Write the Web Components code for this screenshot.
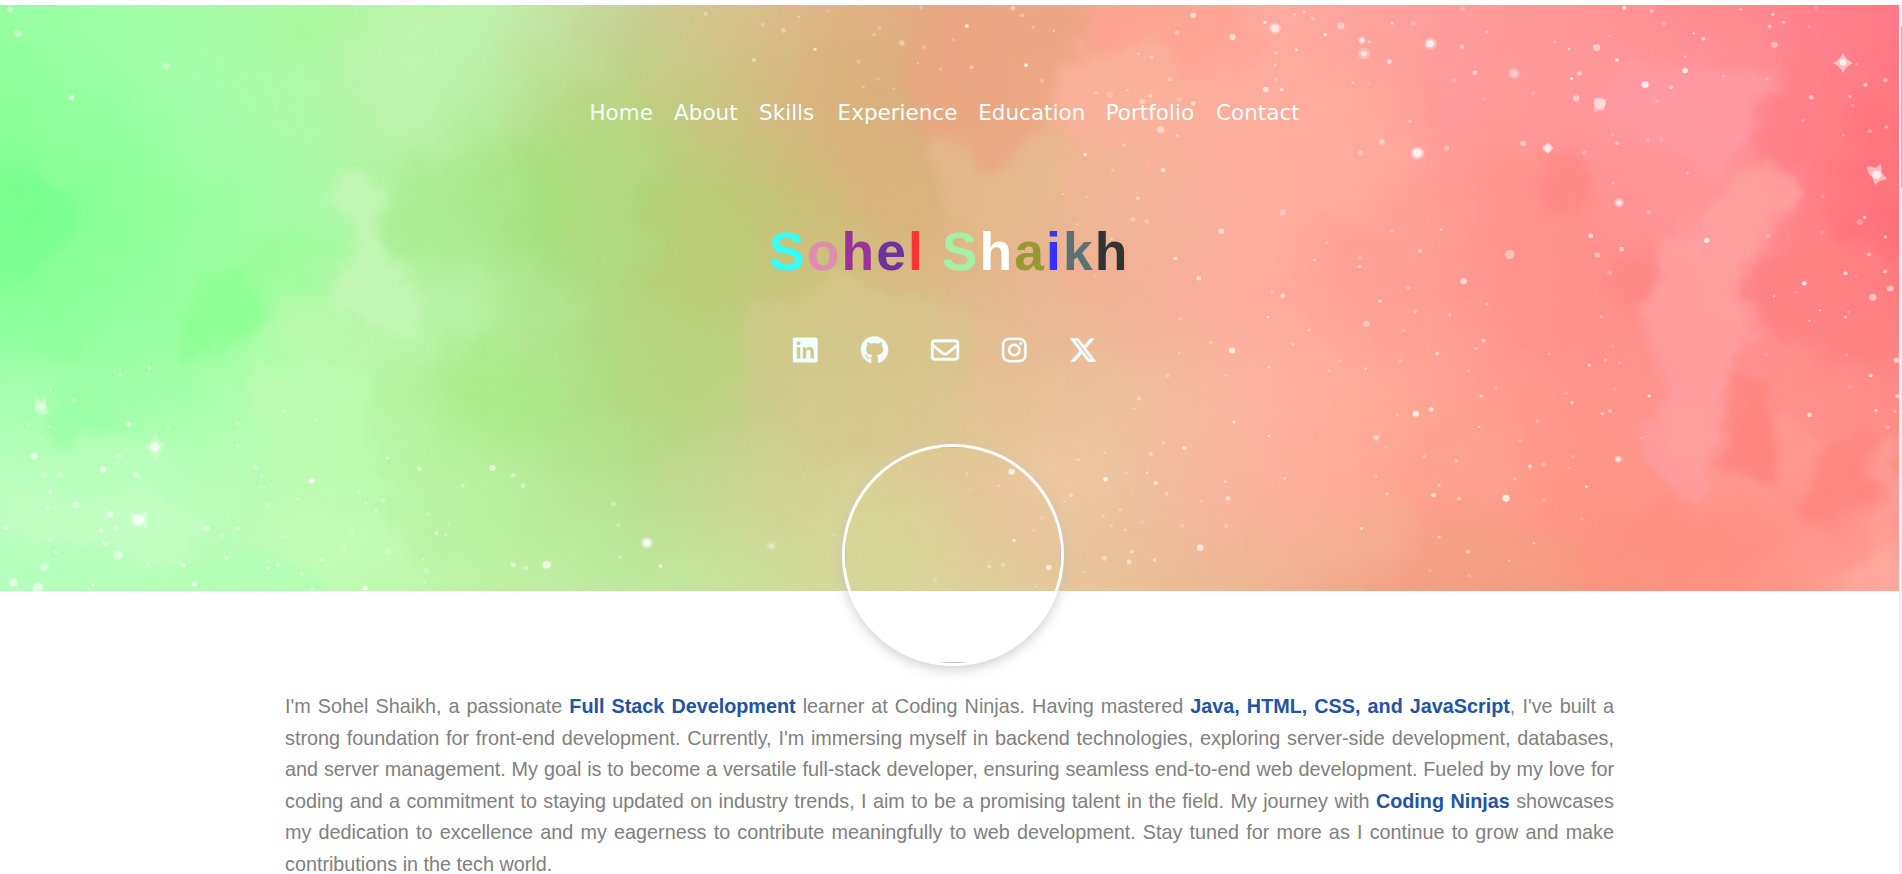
<!DOCTYPE html>
<html lang="en">
<head>
<meta charset="utf-8">
<title>Sohel Shaikh</title>
<style>
html{height:100%;overflow:hidden;background:#fff}
body{margin:0;height:100%;display:flex;font-family:"Liberation Sans",Arial,sans-serif}
main{flex:1;min-width:0}
</style>
</head>
<body>
<main>
<hero-banner>
  <site-nav></site-nav>
  <color-title text="Sohel Shaikh"></color-title>
  <social-links></social-links>
  <profile-photo slot="photo"></profile-photo>
</hero-banner>
<about-text>I'm Sohel Shaikh, a passionate <b>Full Stack Development</b> learner at Coding Ninjas. Having mastered <b>Java, HTML, CSS, and JavaScript</b>, I've built a strong foundation for front-end development. Currently, I'm immersing myself in backend technologies, exploring server-side development, databases, and server management. My goal is to become a versatile full-stack developer, ensuring seamless end-to-end web development. Fueled by my love for coding and a commitment to staying updated on industry trends, I aim to be a promising talent in the field. My journey with <b>Coding Ninjas</b> showcases my dedication to excellence and my eagerness to contribute meaningfully to web development. Stay tuned for more as I continue to grow and make contributions in the tech world.</about-text>
</main>
<scroll-rail></scroll-rail>
<script>
const define=(name,html,ready)=>customElements.define(name,class extends HTMLElement{
  connectedCallback(){
    if(this.shadowRoot)return;
    this.attachShadow({mode:'open'}).innerHTML=html;
    if(ready)ready(this,this.shadowRoot);
  }
});

/* Watercolour sky: a colour grid softened vertically, soft clouds on top, then stars. */
const GRID=[
'98ffa2 a1ffa6 aef9a2 c1f2b0 c9d095 dcb988 e8a883 f6a48a ffaaa0 ff9e9c ff9495 ff8890 ff7888',
'8dff9a a2ffaa b0f9a9 baeea3 bdd080 d6b880 e6a984 f7b297 ffac9c ff9c9a ff9899 ff929a ff7880',
'7aff90 92ff9c aafba8 aeea90 acd678 c9c078 deb482 f0b898 ffaf9e ff9f98 ff9292 ff9698 ff6e78',
'86ff98 96ffa0 aafca4 b4f0a0 b2d880 c9c47c deb98a f0b296 ffab9c ff9f94 ff8f8b ff9296 ff7a80',
'a8ffb0 a0ffa8 bafcb0 b0ee92 b2da82 cdcc8c e0c492 eec29c ffb4a0 ffa494 ff948a ff938f ff8c86',
'bcffc0 bbffbd bafab0 b8f2a0 b9e090 d4d296 e2ca98 eec29e fcb29c ffa28e ff9484 ff9a92 ff8a82',
'b4ffbe b4ffb8 bdfab4 bff2a4 bdeaa0 cfdd98 dcd29a e8c299 eeb492 f49d82 fb957f ff9284 ffa59c'
].map(r=>r.split(' '));

/* colour, opacity, blur class, polygon */
const CLOUDS=[
['78ff90',.7,'m','0,150 20,170 45,180 80,205 70,240 0,290'],
['90ff9c',.6,'l','0,40 25,60 30,100 70,90 160,100 150,150 70,160 0,150'],
['8cff94',.9,'m','175,325 195,300 205,275 240,265 268,280 272,318 250,336 225,345 210,368 180,362'],
['98fb98',.6,'m','235,240 290,235 335,245 330,262 300,285 260,275'],
['8cff9a',.7,'m','45,300 75,310 90,340 80,370 60,370 42,330'],
['96ffa2',.6,'m','60,380 100,395 120,405 125,430 85,445 50,430'],
['a9ea8e',.6,'l','395,185 440,150 500,150 530,200 525,250 480,262 440,275 390,270 380,230'],
['a4df74',.5,'l','525,130 555,120 580,180 570,260 545,292 525,250 505,225'],
['c0f6ae',.55,'l','270,300 380,275 470,280 480,330 400,380 310,370 270,340'],
['c8f7ba',.75,'m','322,203 332,182 355,168 380,174 390,195 386,235 396,262 420,285 410,335 350,315 325,295 352,255 350,225'],
['bbfdb0',.8,'m','258,368 320,360 365,382 370,440 400,500 350,500 280,470 250,420'],
['a7eb88',.7,'l','440,350 510,340 550,400 575,430 520,440 460,420'],
['c4ffb8',.7,'l','280,500 340,490 390,530 430,585 250,585'],
['c4ffc4',.8,'m','85,500 130,480 160,500 220,525 170,560 110,560 75,530'],
['c4ffc4',.7,'m','5,505 45,495 85,505 90,530 40,545 0,530'],
['acffb4',.7,'m','190,560 290,555 330,590 200,590'],
['baffbd',.6,'m','40,460 90,430 150,445 190,470 130,490 50,480'],
['c1f3ae',.7,'l','370,10 460,10 470,60 430,150 380,160 350,90'],
['a7f898',.5,'m','280,10 360,10 330,45 285,50'],
['b8da84',.6,'l','560,120 610,90 640,160 625,260 590,270 575,230'],
['bcca76',.8,'l','650,270 700,180 760,190 740,290 700,330 650,290'],
['b6d27a',.7,'l','630,280 700,300 760,350 720,420 660,420 620,350'],
['d6c990',.5,'m','740,310 850,280 930,290 980,340 960,420 830,460 760,400'],
['dab17c',.6,'l','800,40 880,20 920,60 930,150 950,200 930,250 880,240 830,180'],
['eba682',.75,'m','930,8 1060,8 1090,20 1085,45 1058,60 1050,110 1015,155 990,168 960,150 925,130 905,70'],
['e5b98d',.7,'m','922,150 935,132 958,140 980,165 1010,175 1060,115 1070,180 1020,260 960,250 945,190'],
['ffa293',.7,'m','1095,10 1230,8 1260,40 1250,70 1200,75 1160,38 1120,50 1090,40'],
['fcb39c',.6,'m','1060,60 1110,48 1160,42 1190,80 1180,150 1110,160 1060,120'],
['ffae9e',.6,'l','1200,60 1320,50 1400,90 1410,160 1360,215 1280,210 1210,180'],
['f0b192',.6,'m','1050,250 1120,250 1140,290 1110,310 1060,295'],
['d4d796',.45,'l','815,480 880,470 940,500 960,560 940,590 810,590'],
['ecc8a0',.6,'l','1010,440 1100,430 1130,500 1060,540 1010,500'],
['ff9c92',.6,'l','1310,235 1350,225 1400,240 1440,280 1400,330 1330,290'],
['ff9289',.7,'l','1460,160 1530,150 1590,200 1610,290 1600,380 1510,350 1480,250'],
['ff8785',.8,'m','1540,165 1575,158 1590,175 1585,205 1560,215 1540,190'],
['ff8785',.8,'m','1605,260 1640,255 1657,275 1655,295 1632,315 1610,295'],
['ff9ba2',.8,'m','1620,70 1680,60 1760,70 1785,90 1780,130 1740,150 1720,180 1680,150 1600,120'],
['ff7e86',.8,'m','1790,65 1860,55 1902,80 1902,200 1850,230 1800,190 1770,160 1748,150'],
['ff7079',.8,'l','1860,90 1902,80 1902,290 1870,265 1830,235 1850,190'],
['ff8182',.8,'m','1770,250 1810,220 1870,240 1902,270 1902,350 1830,360 1770,340 1745,290'],
['ff9fa0',.9,'m','1745,178 1782,162 1798,180 1795,205 1765,232 1746,275 1748,335 1728,375 1718,440 1710,490 1675,500 1652,480 1645,430 1668,385 1652,340 1638,310 1665,285 1655,245 1700,215'],
['ff8680',.95,'m','1738,372 1755,366 1776,380 1768,420 1782,440 1787,475 1760,480 1718,455 1722,425 1735,405'],
['ff9990',.9,'m','1770,422 1790,410 1815,440 1822,455 1800,490 1784,490 1786,450'],
['ff867f',.8,'m','1830,440 1850,427 1866,436 1864,460 1876,490 1860,515 1810,520 1795,500 1820,470'],
['ff8f80',.7,'l','1640,490 1720,500 1800,520 1790,570 1680,575 1600,540'],
['ff9f98',.8,'m','1902,430 1870,455 1880,490 1868,540 1902,560'],
['ffa89e',.9,'m','1902,540 1870,555 1845,592 1902,592'],
['ffa494',.6,'l','1445,440 1520,430 1530,500 1480,510 1440,490'],
['f2a385',.6,'l','1400,545 1480,510 1560,540 1570,592 1400,592'],
['f2b394',.6,'l','1290,520 1380,500 1420,530 1380,580 1280,570']
];

/* Each star: x y radius opacity(0-9), in thirds of the sky's width */
const STARS=[[0,`25 25 7 6,43 87 10 5,406 172 9 4,175 254 7 7,366 961 5 6,294 979 5 7,124 1020 3 6,102 1062 9 5,182 1046 7 3,316 1109 6 7,71 1110 5 4,120 1116 4 5,411 1116 6 3,101 1147 4 5,380 1168 11 9,83 1192 9 7,290 1192 7 4,252 1227 8 8,334 1240 7 6,147 1241 6 5,108 1240 7 3,582 1106 5 5,583 1165 4 5,697 1074 4 7,776 1097 4 3,625 1221 6 5,641 1244 4 4,764 1256 8 9,639 1273 3 5,649 1273 3 5,730 1303 4 5,657 1320 7 3,124 1284 5 5,117 1325 5 6,185 1320 9 4,271 1344 8 7,340 1357 14 9,285 1381 5 5,247 1386 6 7,14 1379 5 6,124 1409 6 3,258 1420 6 6,506 1381 8 7,583 1382 6 5,545 1399 6 3,557 1346 5 3,697 1401 5 3,136 1443 5 5,289 1451 12 5,109 1481 11 4,555 1458 5 7,449 1477 6 7,363 1474 4 4,682 1475 6 6,657 1484 6 6,788 1462 5 6,739 1499 5 5,476 1525 7 7,33 1522 11 6,93 1535 13 6,228 1528 4 7,895 1536 7 8,765 1539 4 5,950 1197 4 8,1028 1225 6 7,1207 1223 8 7,1258 1242 6 5,1134 1269 5 5,1282 1269 6 5,880 1284 4 5,896 1315 4 5,922 1333 4 6,938 1308 6 5,1051 1343 4 4,1070 1393 4 7,1092 1398 4 4,1099 1368 3 4,863 1385 5 3,951 1439 8 3,843 1428 5 3,1037 1462 4 4,1258 1476 6 7,1288 1484 6 4,1340 1476 10 8,1046 1492 8 3,1041 1521 4 4`],
[600,`259 36 5 4,399 64 5 3,450 80 6 4,487 44 3 5,377 157 5 5,527 129 4 9,559 28 4 2,634 161 5 3,672 90 5 3,685 72 5 3,740 112 7 4,795 123 5 3,787 20 5 3,899 68 5 8,911 176 5 5,1044 170 5 9,1084 211 5 3,1012 21 6 5,1035 40 5 4,682 206 3 4,646 228 3 4,720 232 3 4,779 165 3 4,866 103 4 3,835 180 4 3,1061 71 4 3,1112 81 3 5,1216 243 5 3,1250 247 7 3,1293 235 3 5,1349 250 5 7,1415 85 6 5,1454 40 7 7,1550 97 8 7,1352 150 5 4,1320 140 3 5,1396 207 5 4,1330 265 7 4,1420 260 6 3,1454 270 6 6,1374 339 9 5,1415 354 4 4,1284 379 5 3,1189 404 5 7,1380 444 6 7,1256 444 4 3,1318 518 5 5,1134 507 3 5,1194 515 3 4,1306 573 6 4,1340 579 6 3,1170 586 4 3,1523 604 7 7,1254 625 3 6,1410 675 5 6,1468 727 6 7,1213 723 4 2,1423 833 5 3,1498 895 3 6,1549 916 8 8,1420 923 3 4,1391 981 5 4,1534 981 4 3,1321 1042 5 4,1309 1068 4 4,1554 1103 4 6,1381 1157 4 4,1432 1170 5 7,1350 1186 5 5,1237 1183 3 4,1172 1201 4 4,1009 1233 8 8,900 1238 4 3,1239 1252 6 8,1362 1262 5 7,1289 1234 4 3,1341 1236 3 6,1389 1290 5 4,1154 1294 5 5,1138 1310 3 5,1084 1353 6 2,977 1270 4 3,908 1281 3 3,1539 1302 6 6,1533 1258 4 6,1474 1310 3 5,1329 1365 6 2,1427 1374 5 3,1535 1375 5 3,1253 1374 4 4,1288 1384 4 4,1233 1347 4 4,1275 1332 4 4,1015 1412 4 8,1063 1386 4 3,954 1480 4 6,988 1476 5 4,1100 1483 7 7,1471 1431 8 8,1303 1441 5 5,1236 1459 7 4,1297 1468 6 6,1359 1463 4 6,1185 1494 3 5,821 1516 5 3,1069 1533 3 4,115 1418 14 6,115 1418 7 9,420 1425 12 2,420 1427 6 4,148 1479 5 6,33 1317 6 4,45 1372 5 4,50 1455 5 4,575 1399 3 4`],
[1262,`32 74 15 3,32 74 10 7,7 58 4 8,80 37 4 4,104 31 4 6,125 48 5 4,155 90 4 9,85 130 4 7,193 68 9 5,245 105 10 3,245 105 6 8,250 140 15 3,250 140 7 8,263 109 4 4,312 161 6 7,319 60 4 7,371 60 6 3,413 114 15 4,412 114 9 9,490 122 6 5,492 22 6 3,522 190 6 6,470 210 5 3,551 83 3 6,618 192 14 3,618 192 8 4,34 137 4 5,33 170 4 5,35 207 4 4,9 234 7 7,48 234 5 6,222 216 4 4,261 216 4 3,544 259 4 4,665 244 5 3,717 110 3 5,753 128 3 7,759 205 4 8,778 192 6 6,820 124 9 6,870 157 5 8,852 95 3 5,888 21 5 8,955 28 6 4,985 61 6 3,770 257 8 6,828 270 15 5,939 221 9 9,1002 228 5 6,969 263 5 3,1037 184 7 9,1037 148 3 7,1058 87 3 7,1082 101 5 7,1131 199 3 6,1173 25 3 6,1252 37 4 6,1278 58 4 6,1244 69 5 6,1256 117 8 5,1237 206 5 3,1341 69 4 3,1358 21 4 3,1346 254 6 6,1441 252 4 6,1479 222 5 7,1528 209 6 5,1424 163 8 9,1458 168 4 3,1530 332 4 6,1490 343 5 4,1425 354 3 5,1326 315 4 4,1447 276 4 3,1507 457 11 8,1043 452 3 6,362 317 5 4,294 371 7 5,242 400 7 4,452 387 7 4,381 400 17 4,381 400 11 9,640 374 7 5,700 387 12 4,700 388 7 7,859 352 3 5,871 374 5 5,945 365 4 4,979 365 3 5,790 400 6 3,875 530 12 4,875 530 7 8,860 479 3 5,948 555 6 3,51 555 8 4,806 616 6 8,822 666 7 5,881 651 6 6,852 713 6 3,607 665 12 5,387 655 5 5,439 600 3 8,318 604 4 3,159 634 3 4,129 680 3 7,240 675 4 4,239 696 4 6,494 735 8 7,359 752 5 4,289 787 4 7,376 814 4 5,256 846 8 5,51 773 6 5,25 763 4 4,15 828 3 8,115 862 3 7,347 863 5 3,460 823 3 8,550 794 4 5,543 890 5 6,429 924 5 6,190 943 3 7,165 968 4 4,76 900 4 5,254 963 3 8,340 944 5 3,507 969 3 6,525 911 3 6,17 959 4 6,537 1035 4 7,573 1015 5 3,377 1081 8 9,415 1070 6 8,331 1084 4 4,531 1116 3 8,17 1139 3 9,280 1144 8 4,280 1144 4 6,304 1168 4 3,398 1193 4 4,476 1204 5 4,280 1245 4 4,55 1250 4 5,307 1290 4 5,434 1268 4 5,421 1294 6 7,483 1303 5 5,598 1302 9 9,620 1250 4 5,657 1219 5 7,690 1213 6 3,873 1200 9 4,873 1200 5 8,795 1272 4 8,784 1355 5 3,244 1381 4 7,434 1403 4 6,505 1441 5 5,412 1491 3 4,508 1505 3 4,667 1420 3 5,606 1465 3 4,760 1052 4 7,853 1074 5 5,746 1028 5 3,834 1081 4 6,675 1100 5 3,802 954 4 8,842 941 4 4,876 948 3 5,859 905 3 5,949 1034 4 9,831 827 4 4,704 925 3 4,1090 628 7 9,1241 617 5 3,1372 608 6 2,1465 580 8 3,1477 568 4 7,1528 619 4 7,1488 665 5 6,1430 714 5 8,1329 740 6 9,1255 774 3 6,1540 754 8 6,1527 709 5 6,1497 777 9 6,1368 811 3 7,1342 838 3 6,1430 829 3 9,1455 723 3 4,1309 764 3 4,1374 513 5 3,1437 815 3 4,1432 928 4 3,1555 941 7 7,1492 981 5 7,1557 1035 5 7,1440 1011 5 2,1505 1072 4 7,1551 1075 4 5,1533 1117 5 4,1342 1084 6 7,1236 926 4 2,763 1193 4 3,754 1223 3 4,632 1151 4 3,691 1307 5 3,864 1015 5 3,931 1144 3 4`]];

const sky=()=>{
  let defs='',bands='',clouds='',stars='';
  GRID.forEach((row,i)=>{
    defs+=`<linearGradient id="g${i}" gradientUnits="userSpaceOnUse" x1="0" x2="1900">`+row.map((c,j)=>`<stop offset="${j/12}" stop-color="#${c}"/>`).join('')+'</linearGradient>';
    const y=i?i*98-44:-200;
    bands+=`<rect x="-150" y="${y}" width="2200" height="${i==6?300:i?98:254}" fill="url(#g${i})"/>`;
  });
  for(const [c,o,k,p] of CLOUDS)clouds+=`<polygon fill="#${c}" fill-opacity="${o}" points="${p}" filter="url(#${k})"/>`;
  for(const [x,list] of STARS)stars+=`<g transform="translate(${x} 0) scale(.408 .3827)">`+list.split(',').map(s=>{const [a,b,r,o]=s.split(' ');return `<circle cx="${a}" cy="${b}" r="${r}" opacity="${o/10*.85}"/>`}).join('')+'</g>';
  const spark=(x,y,r,o)=>`<path opacity="${o}" d="M${x} ${y-r}Q${x+r*.3} ${y-r*.3} ${x+r} ${y}Q${x+r*.3} ${y+r*.3} ${x} ${y+r}Q${x-r*.3} ${y+r*.3} ${x-r} ${y}Q${x-r*.3} ${y-r*.3} ${x} ${y-r}"/>`;
  stars+=spark(1843,63,10,.5)+spark(1548,148,6,.4)+`<path opacity=".5" d="M1867 167q4-2 8 1l6-4 1 9 5 6-7 2-5 4-3-8q-5-4-5-10z"/><path opacity=".35" d="M129 512l10 2 8-2v15l-14 0z"/><path opacity=".35" d="M36 397l5 4 5-4v7l3 10-8 1-7-4z"/><path opacity=".25" d="M155 432l4 8 6 4-4 8-6 8-5-9-5-4 6-5z"/><path opacity=".35" d="M1594 98l12 2-2 10-10 2z"/>`;
  return `<svg viewBox="0 5 1899 586" preserveAspectRatio="none"><defs>${defs}
  <filter id="v" filterUnits="userSpaceOnUse" x="-150" y="-200" width="2200" height="1000" color-interpolation-filters="sRGB"><feGaussianBlur stdDeviation="12 34"/></filter>
  <filter id="m" x="-40%" y="-40%" width="180%" height="180%" color-interpolation-filters="sRGB"><feGaussianBlur stdDeviation="7"/></filter>
  <filter id="l" x="-60%" y="-60%" width="220%" height="220%" color-interpolation-filters="sRGB"><feGaussianBlur stdDeviation="18"/></filter>
  <filter id="w" filterUnits="userSpaceOnUse" x="-60" y="-60" width="2020" height="720" color-interpolation-filters="sRGB"><feTurbulence type="fractalNoise" baseFrequency=".022" numOctaves="4" seed="4" result="n"/><feDisplacementMap in="SourceGraphic" in2="n" scale="38" xChannelSelector="R" yChannelSelector="G"/></filter></defs>
  <g filter="url(#w)"><g filter="url(#v)">${bands}</g>${clouds}</g><g fill="#fff">${stars}</g></svg>`;
};

define('hero-banner',`<style>
:host{display:flex;flex-direction:column;align-items:center;position:relative;box-sizing:border-box;height:586px;margin-top:5px}
.sky{position:absolute;inset:0;overflow:hidden}
.sky svg{display:block;width:100%;height:100%}
.body{position:relative;display:flex;flex-direction:column;align-items:flex-start;width:100%;flex:1}
.photo{position:absolute;left:842px;top:439px}
</style><div class="sky">${sky()}</div><div class="body"><slot></slot></div><div class="photo"><slot name="photo"></slot></div>`);

define('site-nav',`<style>
:host{display:block;margin:94px 0 0 589.4px;height:28px}
nav{display:grid;grid-template-columns:84.7px 85px 78.5px 140.7px 127.4px 110.4px auto;font:21.5px/28px "DejaVu Sans",Verdana,sans-serif;color:azure;white-space:nowrap}
</style><nav><a>Home</a><a>About</a><a>Skills</a><a>Experience</a><a>Education</a><a>Portfolio</a><a>Contact</a></nav>`);

define('color-title',`<style>
:host{display:block;margin:95px 0 0 769px}
h1{margin:0;font-size:53.4px;line-height:60px;letter-spacing:2.1px;font-weight:700;white-space:pre}
</style><h1></h1>`,(el,root)=>{
  const colors=['#33ffff','#e08eae','#993399','#6f339f','#ff3333','','#a6f0a6','#fff','#999933','#3333ff','#597272','#333'];
  root.querySelector('h1').innerHTML=[...el.getAttribute('text')].map((c,i)=>`<span style="color:${colors[i]||'inherit'}">${c}</span>`).join('');
});

define('social-links',`<style>
:host{display:flex;gap:43px;margin:54px 0 0 793px;align-items:center}
svg{height:28px;display:block;fill:azure;stroke:azure;stroke-width:7;overflow:visible}
.x{stroke-width:14}
</style>
<svg viewBox="0 0 448 512"><path d="M416 32H31.9C14.3 32 0 46.500 0 64.300v383.400C0 465.500 14.300 480 31.900 480H416c17.600 0 32-14.500 32-32.300V64.300c0-17.800-14.400-32.300-32-32.300zM135.400 416H69V202.200h66.500V416zm-33.200-243c-21.300 0-38.500-17.300-38.500-38.500S80.900 96 102.200 96c21.200 0 38.500 17.300 38.500 38.500 0 21.300-17.200 38.500-38.500 38.500zm282.100 243h-66.400V312c0-24.800-.5-56.700-34.500-56.700-34.600 0-39.900 27-39.900 54.900V416h-66.400V202.200h63.700v29.200h.9c8.900-16.800 30.600-34.500 62.900-34.500 67.200 0 79.700 44.300 79.700 101.900V416z"/></svg>
<svg viewBox="0 0 496 512"><path d="M165.900 397.400c0 2-2.300 3.600-5.200 3.600-3.300.3-5.600-1.300-5.600-3.600 0-2 2.300-3.600 5.200-3.600 3-.3 5.600 1.300 5.600 3.600zm-31.100-4.500c-.7 2 1.300 4.300 4.300 4.900 2.600 1 5.600 0 6.200-2s-1.300-4.300-4.300-5.200c-2.600-.7-5.500.3-6.200 2.300zm44.200-1.700c-2.900.7-4.900 2.600-4.600 4.900.3 2 2.900 3.300 5.900 2.600 2.900-.7 4.900-2.600 4.600-4.600-.3-1.900-3-3.200-5.900-2.900zM244.800 8C106.100 8 0 113.300 0 252c0 110.900 69.800 205.800 169.500 239.200 12.800 2.300 17.300-5.600 17.300-12.100 0-6.200-.3-40.400-.3-61.400 0 0-70 15-84.700-29.800 0 0-11.400-29.100-27.800-36.600 0 0-22.900-15.700 1.600-15.400 0 0 24.900 2 38.600 25.800 21.900 38.600 58.600 27.500 72.900 20.900 2.300-16 8.800-27.100 16-33.700-55.900-6.200-112.300-14.300-112.300-110.500 0-27.500 7.600-41.300 23.600-58.900-2.600-6.500-11.100-33.300 2.600-67.900 20.900-6.500 69 27 69 27 20-5.600 41.500-8.500 62.800-8.500s42.800 2.900 62.800 8.500c0 0 48.100-33.600 69-27 13.700 34.700 5.200 61.400 2.600 67.900 16 17.700 25.800 31.500 25.800 58.900 0 96.500-58.900 104.200-114.800 110.500 9.200 7.900 17 22.900 17 46.400 0 33.700-.3 75.400-.3 83.600 0 6.500 4.600 14.400 17.300 12.100C428.200 457.800 496 362.900 496 252 496 113.300 383.500 8 244.800 8z"/></svg>
<svg viewBox="0 0 512 512"><path d="M64 112c-8.800 0-16 7.200-16 16v22.100L220.500 291.700c20.700 17 50.400 17 71.100 0L464 150.100V128c0-8.800-7.200-16-16-16H64zM48 212.200V384c0 8.800 7.200 16 16 16H448c8.800 0 16-7.200 16-16V212.200L322 328.800c-38.400 31.500-93.700 31.500-132 0L48 212.200zM0 128C0 92.700 28.700 64 64 64H448c35.300 0 64 28.700 64 64V384c0 35.300-28.700 64-64 64H64c-35.300 0-64-28.700-64-64V128z"/></svg>
<svg viewBox="0 0 448 512"><path d="M224.100 141c-63.600 0-114.900 51.300-114.900 114.900s51.300 114.900 114.900 114.900S339 319.500 339 255.900 287.700 141 224.100 141zm0 189.600c-41.100 0-74.700-33.500-74.700-74.700s33.500-74.700 74.700-74.700 74.700 33.500 74.700 74.700-33.600 74.700-74.700 74.700zm146.400-194.300c0 14.900-12 26.800-26.800 26.800-14.900 0-26.800-12-26.800-26.800s12-26.800 26.800-26.800 26.800 12 26.800 26.800zm76.100 27.200c-1.700-35.900-9.900-67.700-36.200-93.900-26.200-26.200-58-34.400-93.900-36.200-37-2.100-147.900-2.100-184.900 0-35.800 1.700-67.600 9.900-93.900 36.100s-34.400 58-36.200 93.900c-2.100 37-2.100 147.900 0 184.900 1.700 35.900 9.900 67.700 36.200 93.900s58 34.400 93.900 36.200c37 2.100 147.900 2.100 184.900 0 35.900-1.700 67.700-9.900 93.900-36.200 26.200-26.200 34.400-58 36.200-93.900 2.100-37 2.100-147.800 0-184.800zM398.800 388c-7.800 19.600-22.900 34.700-42.600 42.600-29.500 11.700-99.500 9-132.100 9s-102.700 2.600-132.100-9c-19.600-7.800-34.700-22.900-42.600-42.600-11.700-29.500-9-99.500-9-132.100s-2.600-102.700 9-132.100c7.800-19.600 22.900-34.700 42.600-42.600 29.500-11.700 99.500-9 132.100-9s102.700-2.600 132.100 9c19.600 7.800 34.700 22.900 42.600 42.600 11.700 29.500 9 99.500 9 132.100s2.700 102.700-9 132.100z"/></svg>
<svg class="x" viewBox="0 0 512 512"><path d="M389.200 48h70.600L305.600 224.200 487 464H345L233.700 318.600 106.500 464H35.800L200.700 275.500 26.800 48H172.400L272.900 180.900 389.200 48zM364.400 421.800h39.100L151.100 88h-42L364.400 421.800z"/></svg>`);

define('profile-photo',`<style>
:host{display:block;box-sizing:border-box;width:222px;height:222px;border:3px solid rgba(255,255,255,.95);border-radius:50%;box-shadow:0 4px 12px rgba(190,194,198,.75)}
.clip{height:100%;border-radius:50%;overflow:hidden}
.frame{box-sizing:border-box;height:100%;border:1px solid #bbb}
</style><div class="clip"><div class="frame"></div></div>`);

define('about-text',`<style>
:host{display:block;margin:100px 285px 0;font-size:19.8px;line-height:31.5px;color:#808080;text-align:justify}
::slotted(b){color:#2353a3}
</style><slot></slot>`);

define('scroll-rail',`<style>
:host{display:flex;width:3px;background:#f1f1f1;align-items:flex-start;justify-content:flex-end;margin-top:5px}
i{width:1px;height:161px;margin-top:21px;background:#b8b8b8}
</style><i></i>`);
</script>
</body>
</html>
